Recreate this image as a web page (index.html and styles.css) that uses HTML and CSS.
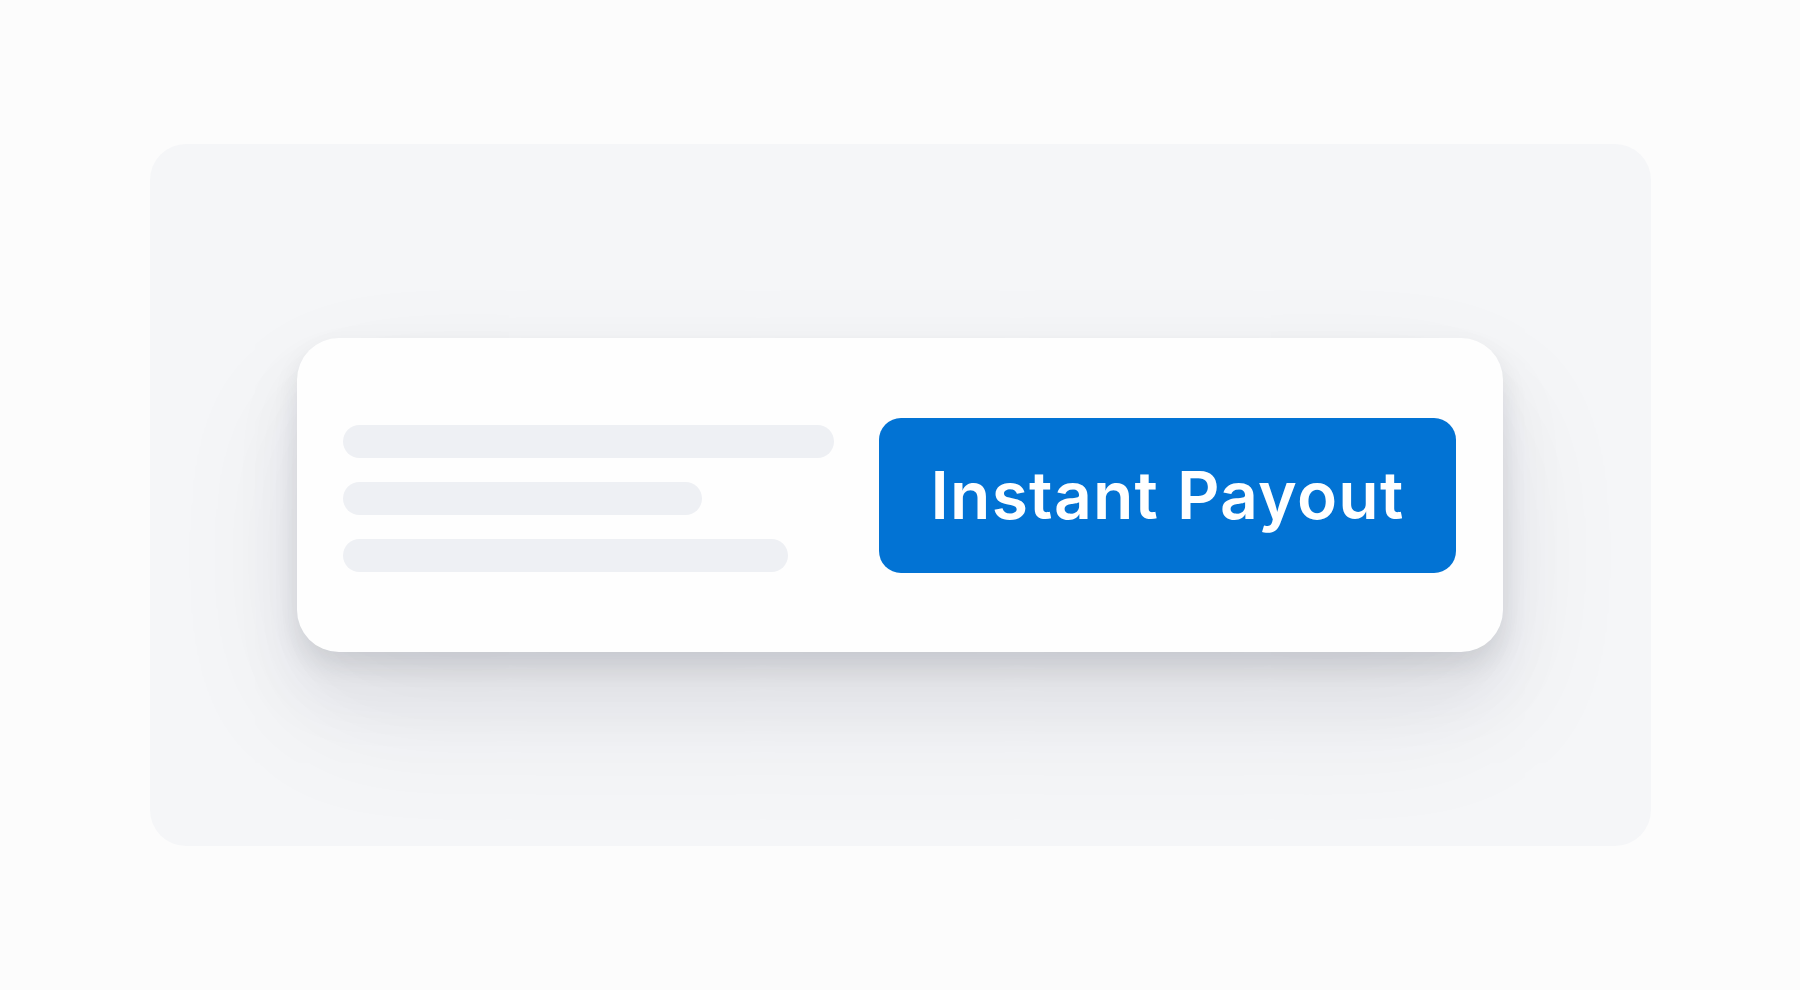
FILE: index.html
```html
<!DOCTYPE html>
<html lang="en">
<head>
<meta charset="utf-8">
<title>Instant Payout</title>
<link rel="stylesheet" href="styles.css">
</head>
<body>
  <main class="stage">
    <section class="panel">
      <div class="card">
        <div class="lines">
          <div class="line line-long"></div>
          <div class="line line-short"></div>
          <div class="line line-mid"></div>
        </div>
        <button class="payout-btn" type="button">Instant Payout</button>
      </div>
    </section>
  </main>
</body>
</html>
```

FILE: styles.css
```css
html, body {
  margin: 0;
  padding: 0;
}

body {
  background: #fcfcfc;
  font-family: Inter, "Noto Sans", "Liberation Sans", sans-serif;
}

.stage {
  width: 1800px;
  height: 990px;
  display: flex;
  align-items: center;
  justify-content: center;
}

.panel {
  width: 1501px;
  height: 702px;
  background: #f5f6f8;
  border-radius: 36px;
  display: flex;
  align-items: center;
  justify-content: center;
}

.card {
  box-sizing: border-box;
  width: 1206px;
  height: 314px;
  background: #fefefe;
  border-radius: 42px;
  padding: 0 47px 0 46px;
  display: flex;
  align-items: center;
  gap: 45px;
  box-shadow:
    0 14px 24px rgba(30, 35, 50, 0.10),
    0 40px 70px rgba(30, 35, 50, 0.07),
    0 60px 140px rgba(30, 35, 50, 0.07);
}

.lines {
  width: 491px;
  display: flex;
  flex-direction: column;
  gap: 24px;
  margin-top: 7px;
}

.line {
  height: 33px;
  border-radius: 17px;
  background: #eef0f4;
}

.line-long { width: 491px; }
.line-short { width: 359px; }
.line-mid { width: 445px; }

.payout-btn {
  width: 577px;
  height: 155px;
  border: none;
  border-radius: 22px;
  background: #0273d4;
  color: #ffffff;
  font-family: Inter, "Noto Sans", "Liberation Sans", sans-serif;
  font-size: 66px;
  font-weight: 600;
  letter-spacing: 1.2px;
  display: flex;
  align-items: center;
  justify-content: center;
  padding: 0;
  cursor: pointer;
}
```
